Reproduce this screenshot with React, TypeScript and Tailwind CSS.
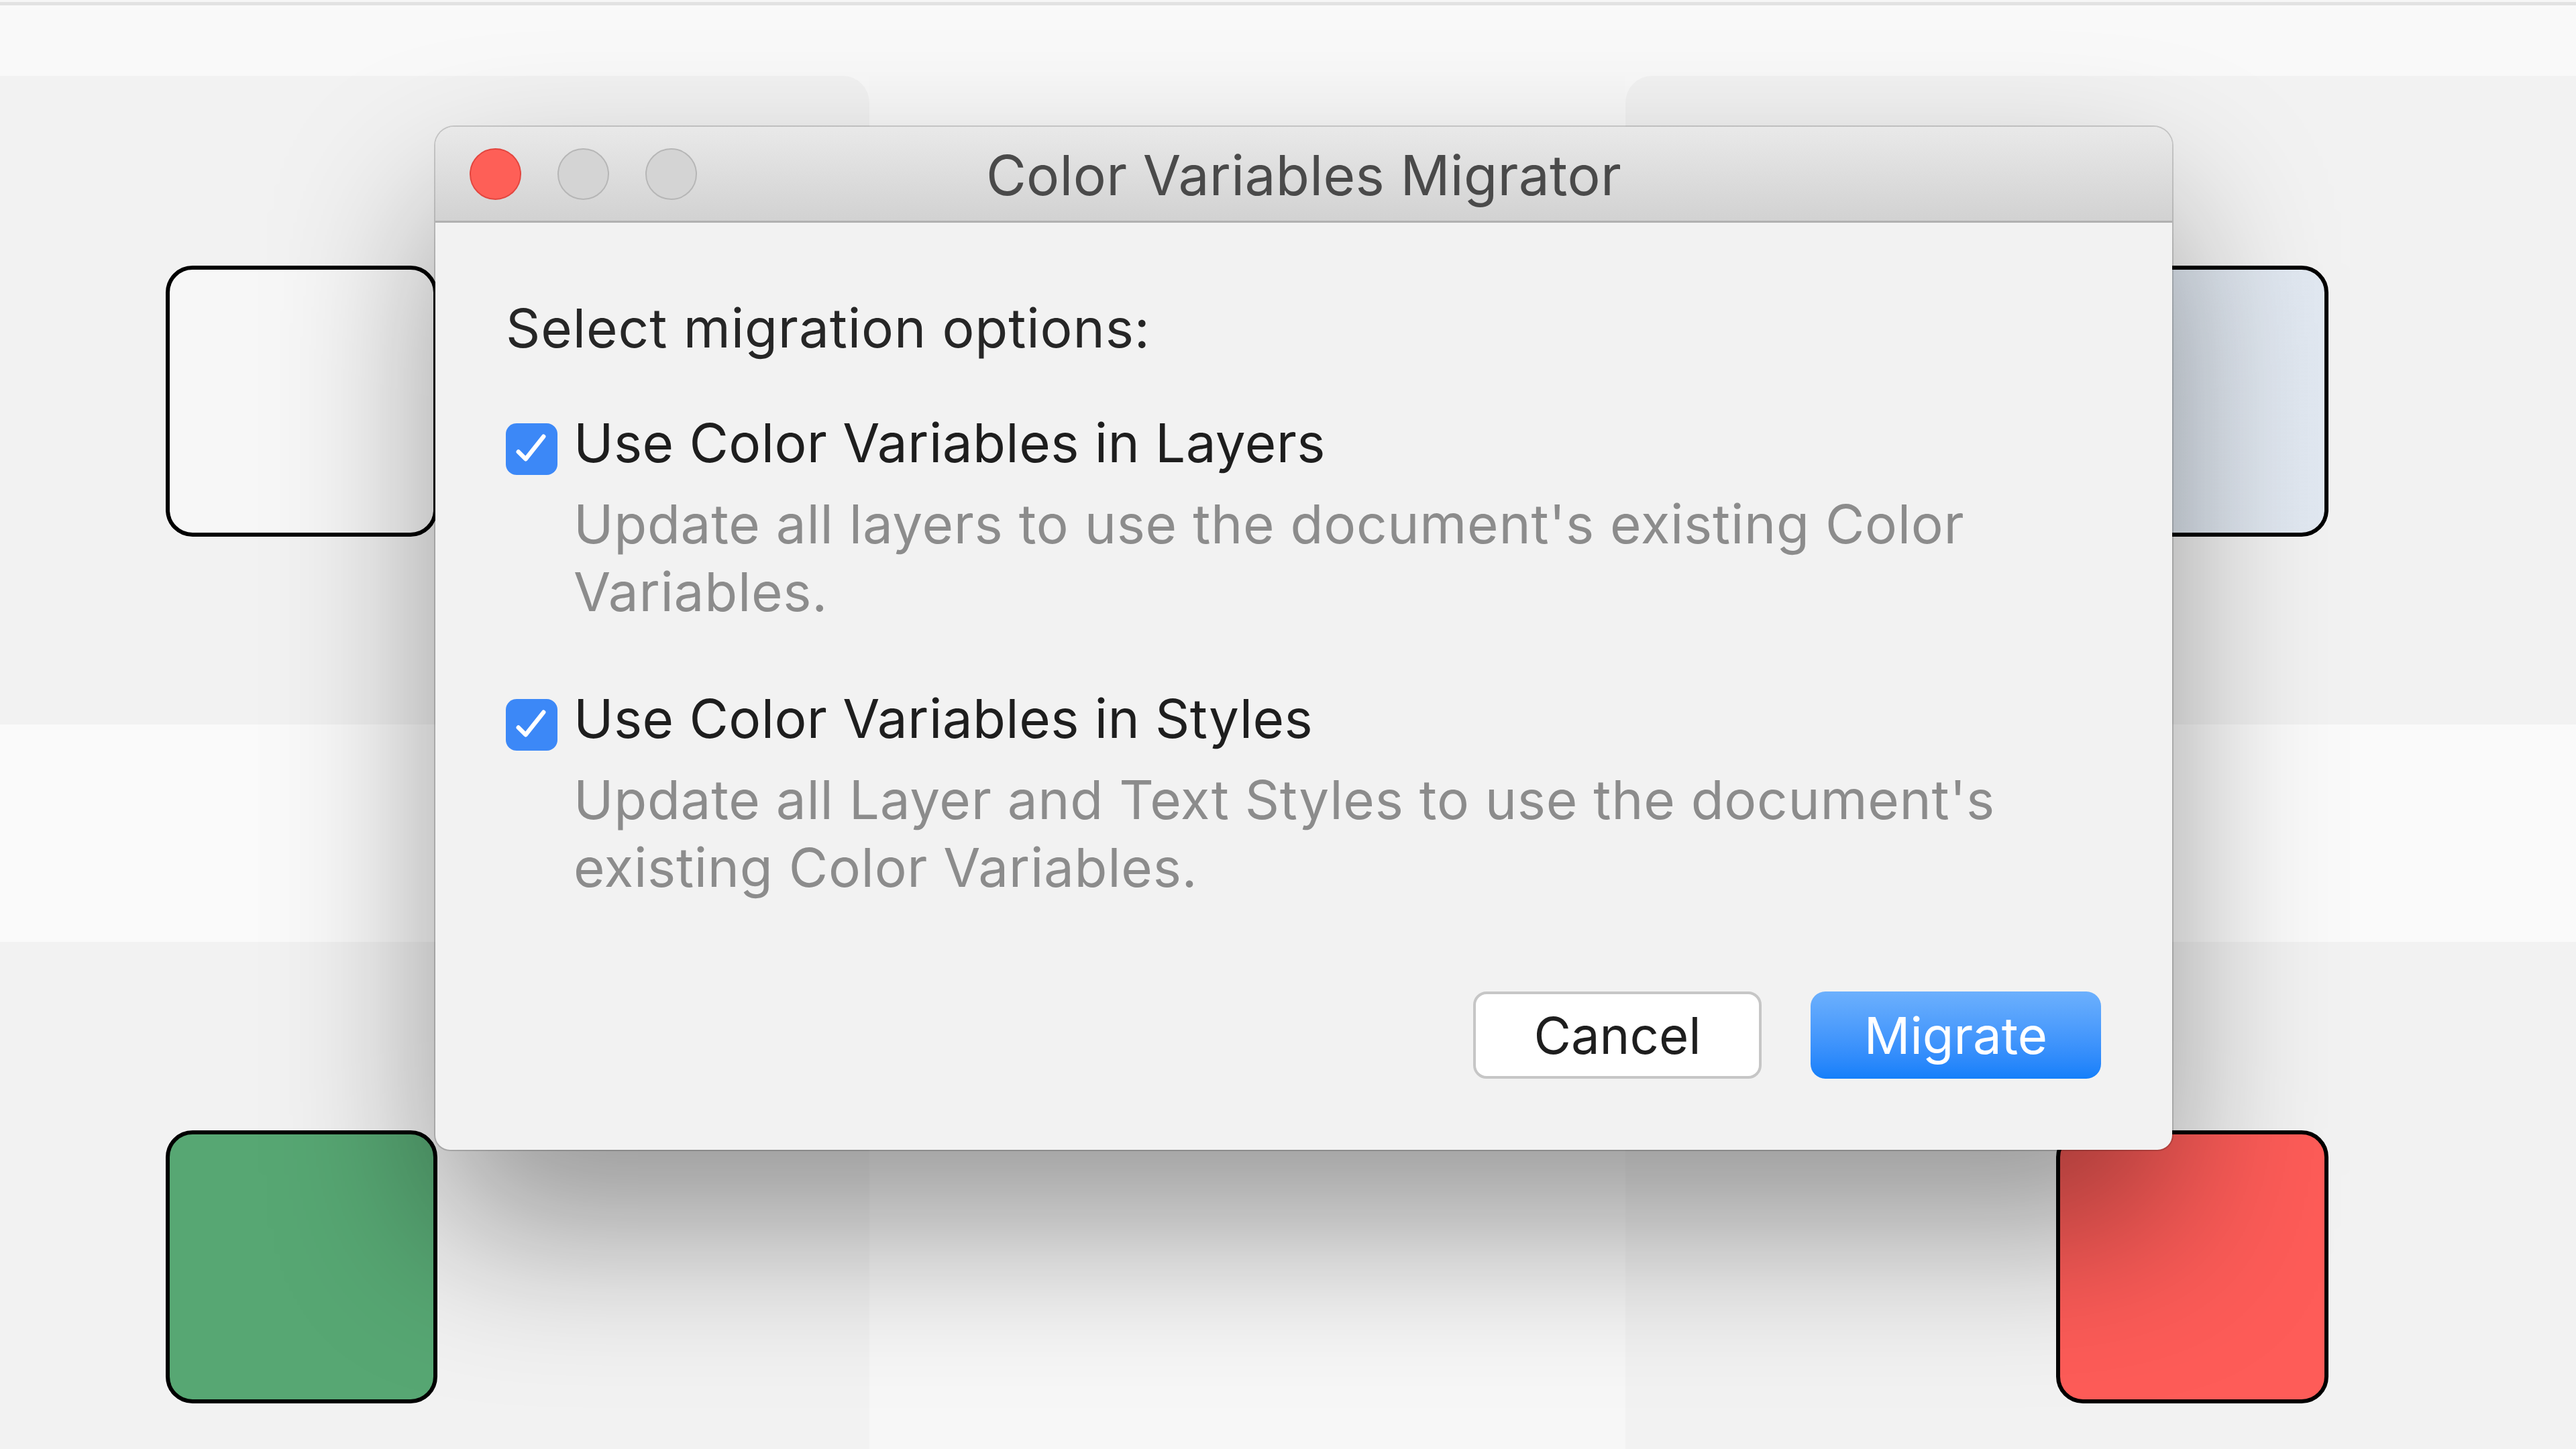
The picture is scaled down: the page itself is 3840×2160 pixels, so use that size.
import React from 'react';

function Check() {
  return (
    <div className="w-[77px] h-[77px] shrink-0 rounded-[16px] bg-[#3c88f7] mt-[21px]">
      <svg viewBox="0 0 78 78" className="w-full h-full">
        <path d="M19 43 L30 54 L57 20" fill="none" stroke="#fff" strokeWidth="6.5" strokeLinecap="round" strokeLinejoin="round" />
      </svg>
    </div>
  );
}

function Option({ label, desc, className = '' }: { label: string; desc: React.ReactNode; className?: string }) {
  return (
    <div className={`flex items-start gap-[24px] ${className}`}>
      <Check />
      <div className="flex flex-col tracking-[0.7px]">
        <div className="text-[80px] leading-[100px] text-[#1e1e1e] tracking-[0.4px]">{label}</div>
        <div className="mt-[20px] text-[80px] leading-[101px] text-[#8c8c8c]">{desc}</div>
      </div>
    </div>
  );
}

export default function App() {
  return (
    <div className="relative w-[3840px] h-[2160px] overflow-hidden bg-[#f9f9f9] font-['Inter',sans-serif]">
      {/* canvas background */}
      <div className="h-[3px] bg-[#f6f6f6]" />
      <div className="h-[5px] bg-[#e2e2e2]" />
      <div className="grid grid-cols-[1296px_1127px_1fr] grid-rows-[105px_967px_324px_1fr] h-[2152px]">
        <div />
        <div />
        <div />
        <div className="bg-[#f2f2f2] rounded-tr-[40px]" />
        <div className="bg-[#f8f8f8]" />
        <div className="bg-[#f2f2f2] rounded-tl-[40px]" />
        <div className="bg-[#fafafa]" />
        <div className="bg-[#fafafa]" />
        <div className="bg-[#fafafa]" />
        <div className="bg-[#f2f2f2]" />
        <div className="bg-[#f7f7f7]" />
        <div className="bg-[#f2f2f2]" />
      </div>

      {/* canvas layers */}
      <div className="absolute left-[247px] top-[396px] w-[405px] h-[404px] rounded-[40px] border-[6px] border-black bg-[#f7f7f7]" />
      <div className="absolute left-[3065px] top-[396px] w-[406px] h-[404px] rounded-[40px] border-[6px] border-black bg-gradient-to-r from-[#dde5ee] to-[#e2e9f2]" />
      <div className="absolute left-[247px] top-[1685px] w-[405px] h-[407px] rounded-[40px] border-[6px] border-black bg-[#57a773]" />
      <div className="absolute left-[3065px] top-[1685px] w-[406px] h-[407px] rounded-[40px] border-[6px] border-black bg-[#fe5c58]" />

      {/* dialog */}
      <div className="absolute left-[649px] top-[189px] w-[2589px] h-[1525px] flex flex-col rounded-t-[28px] rounded-b-[22px] bg-[#f2f2f2] shadow-[0_120px_240px_rgba(0,0,0,0.38),0_0_0_2px_rgba(0,0,0,0.16)]">
        <div className="h-[143px] shrink-0 grid grid-cols-[1fr_auto_1fr] items-center px-[51px] rounded-t-[28px] bg-gradient-to-b from-[#e9e9e9] to-[#d2d2d2] border-b-[3px] border-[#b1b1b1]">
          <div className="flex items-center gap-[54px]">
            <div className="w-[77px] h-[77px] rounded-full bg-[#fe5f57] border-[2px] border-[#e2463f]" />
            <div className="w-[77px] h-[77px] rounded-full bg-[#d4d4d4] border-[2px] border-[#b6b6b6]" />
            <div className="w-[77px] h-[77px] rounded-full bg-[#d4d4d4] border-[2px] border-[#b6b6b6]" />
          </div>
          <div className="text-[82px] leading-none text-[#4a4a4a] tracking-[0.3px] mt-[6px]">Color Variables Migrator</div>
          <div />
        </div>

        <div className="flex flex-col pl-[105px] pr-[106px] pt-[107px]">
          <div className="text-[80px] leading-[100px] text-[#262626] tracking-[0.9px]">Select migration options:</div>
          <Option
            className="mt-[71px]"
            label="Use Color Variables in Layers"
            desc={<>Update all layers to use the document's existing Color<br />Variables.</>}
          />
          <Option
            className="mt-[89px]"
            label="Use Color Variables in Styles"
            desc={<>Update all Layer and Text Styles to use the document's<br />existing Color Variables.</>}
          />
          <div className="mt-[135px] flex justify-end gap-[73px]">
            <button className="w-[430px] h-[130px] rounded-[20px] bg-white border-[4px] border-[#c6c6c6] text-[76px] text-[#1e1e1e]">
              Cancel
            </button>
            <button className="w-[433px] h-[130px] rounded-[22px] bg-gradient-to-b from-[#6cb0fd] to-[#137ffa] text-[76px] text-white">
              Migrate
            </button>
          </div>
        </div>
      </div>
    </div>
  );
}
